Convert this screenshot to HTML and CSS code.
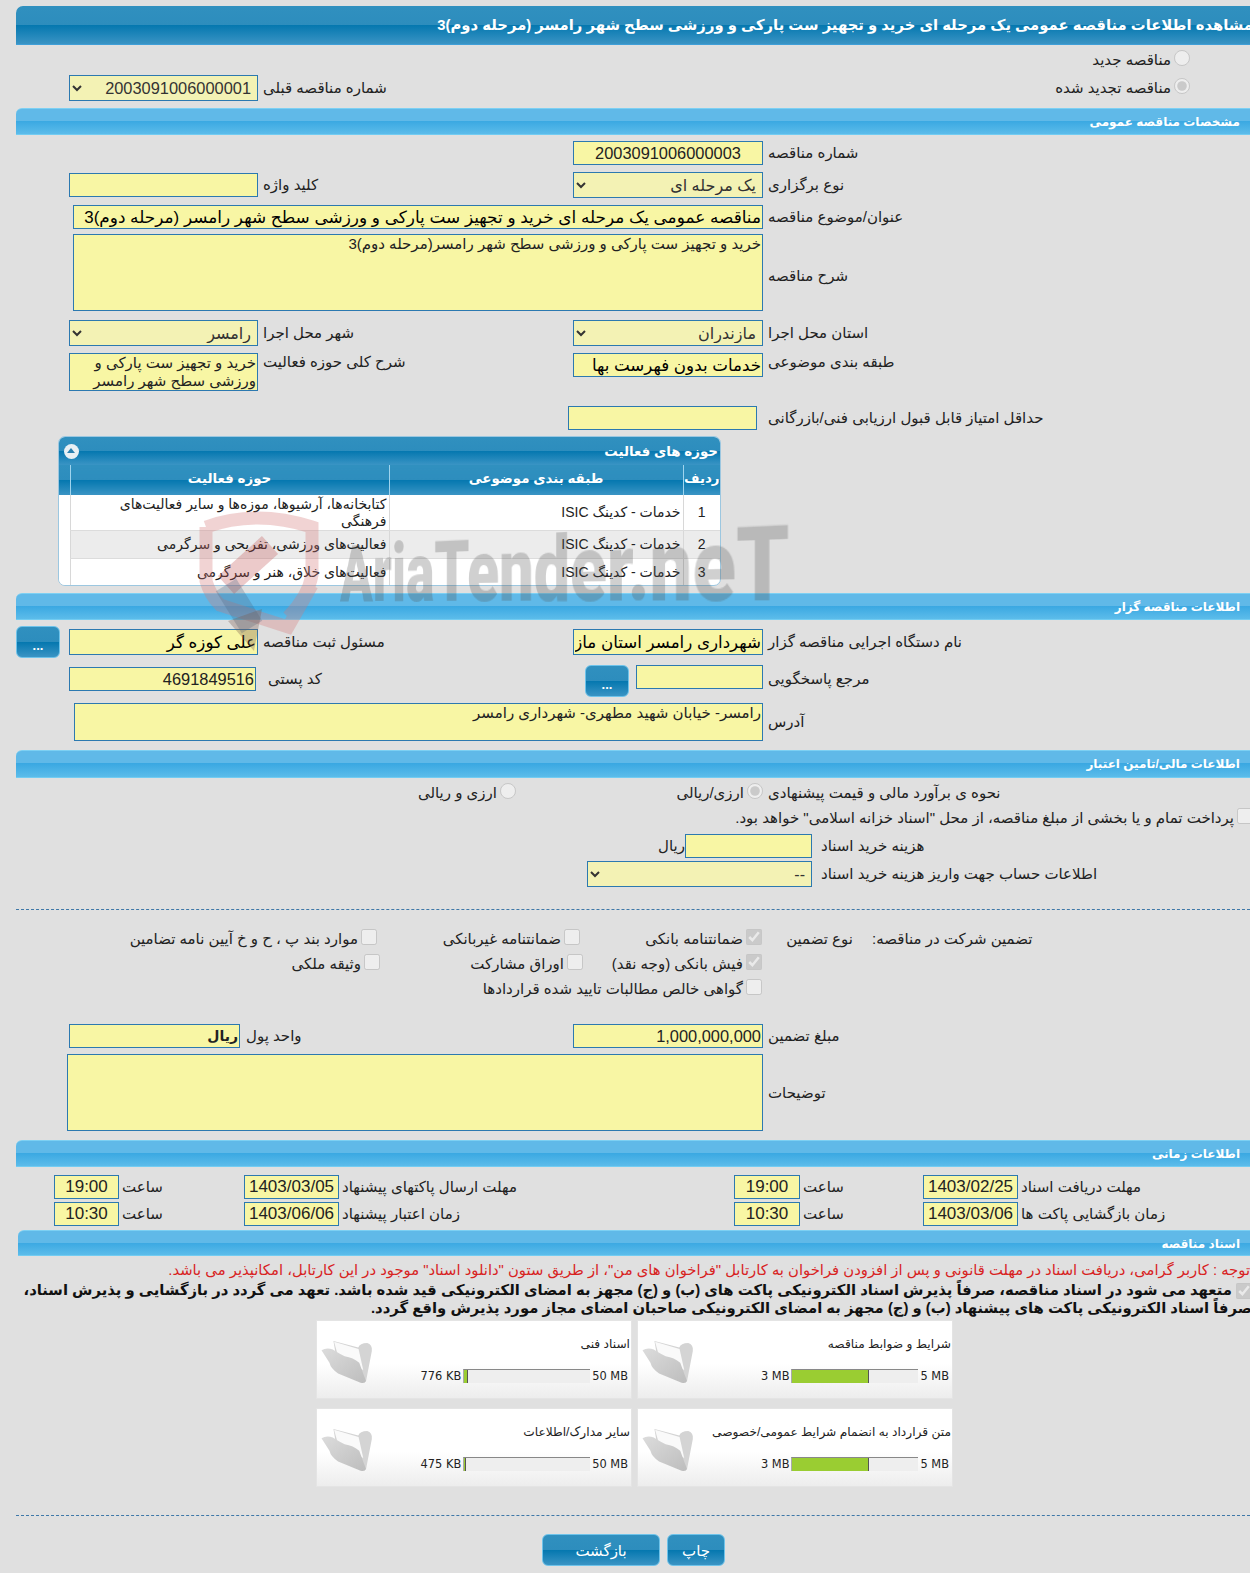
FILE: index.html
```html
<!DOCTYPE html>
<html lang="fa">

<head>
  <meta charset="UTF-8">
  <title>مشاهده اطلاعات مناقصه</title>
  <link rel="stylesheet" href="styles.css">
</head>

<body>
  <svg class="hidden" width="0" height="0">
    <defs>
      <linearGradient id="folderFront" x1="0" y1="0" x2="1" y2="1">
        <stop offset="0" stop-color="#dcdcdc"/>
        <stop offset="1" stop-color="#bdbdbd"/>
      </linearGradient>
    </defs>
    <symbol id="folder" viewBox="30 50 165 145">
      <path d="M70 62 L145 82 Q150 68 172 68 Q188 72 186 92 L168 186 L80 120 Z" fill="#d4d4d4"/>
      <path d="M72 64 L146 86 L160 150 L84 108 Z" fill="#fafafa"/>
      <path d="M34 90 Q50 80 68 88 Q90 102 104 108 Q130 112 148 128 L168 182 Q166 192 152 188 L84 160 Q62 146 58 128 Z" fill="url(#folderFront)"/>
    </symbol>
  </svg>

  <div class="page">
    <div class="mainTitle">مشاهده اطلاعات مناقصه عمومی یک مرحله ای خرید و تجهیز ست پارکی و ورزشی سطح شهر رامسر (مرحله دوم)3</div>

    <div class="radioRow">
      <label class="opt"><input type="radio" disabled> مناقصه جدید</label>
    </div>
    <div class="formRow">
      <select class="inL selectBox num"><option>2003091006000001</option></select>
      <div class="lblL label">شماره مناقصه قبلی</div>
      <label class="optCell opt"><input type="radio" checked disabled> مناقصه تجدید شده</label>
    </div>

    <div class="secBar mt7">مشخصات مناقصه عمومی</div>

    <div class="formRow mt6">
      <input class="inR field num center" value="2003091006000003">
      <div class="lblR label">شماره مناقصه</div>
    </div>
    <div class="formRow mt7">
      <input class="inL field" value="">
      <div class="lblL label">کلید واژه</div>
      <select class="inR selectBox"><option>یک مرحله ای</option></select>
      <div class="lblR label">نوع برگزاری</div>
    </div>
    <div class="formRow mt7">
      <input class="wideField field big" value="مناقصه عمومی یک مرحله ای خرید و تجهیز ست پارکی و ورزشی سطح شهر رامسر (مرحله دوم)3">
      <div class="lblR label">عنوان/موضوع مناقصه</div>
    </div>
    <div class="formRow mt5">
      <textarea class="wideField area h77">خرید و تجهیز ست پارکی و ورزشی سطح شهر رامسر(مرحله دوم)3</textarea>
      <div class="lblR label lblDown">شرح مناقصه</div>
    </div>
    <div class="formRow mt9">
      <select class="inL selectBox"><option>رامسر</option></select>
      <div class="lblL label">شهر محل اجرا</div>
      <select class="inR selectBox"><option>مازندران</option></select>
      <div class="lblR label">استان محل اجرا</div>
    </div>
    <div class="formRow mt7 alignTop">
      <textarea class="inL area h38">خرید و تجهیز ست پارکی و ورزشی سطح شهر رامسر</textarea>
      <div class="lblL label">شرح کلی حوزه فعالیت</div>
      <input class="inR field big" value="خدمات بدون فهرست بها">
      <div class="lblR label">طبقه بندی موضوعی</div>
    </div>
    <div class="formRow mt15">
      <input class="inR field shiftLeft" value="">
      <div class="lblR label">حداقل امتیاز قابل قبول ارزیابی فنی/بازرگانی</div>
    </div>

    <div class="panel">
      <div class="panelTitle">
        <span>حوزه های فعالیت</span>
        <span class="toggle"></span>
      </div>
      <table class="grid">
        <tr>
          <th class="colNo">ردیف</th>
          <th class="colCat">طبقه بندی موضوعی</th>
          <th class="colAct">حوزه فعالیت</th>
          <th class="colEnd"></th>
        </tr>
        <tr class="r1">
          <td class="colNo">1</td>
          <td class="colCat">خدمات - کدینگ ISIC</td>
          <td class="colAct">کتابخانه‌ها، آرشیوها، موزه‌ها و سایر فعالیت‌های<br>فرهنگی</td>
          <td class="colEnd"></td>
        </tr>
        <tr class="r2 alt">
          <td class="colNo">2</td>
          <td class="colCat">خدمات - کدینگ ISIC</td>
          <td class="colAct">فعالیت‌های ورزشی، تفریحی و سرگرمی</td>
          <td class="colEnd"></td>
        </tr>
        <tr class="r3">
          <td class="colNo">3</td>
          <td class="colCat">خدمات - کدینگ ISIC</td>
          <td class="colAct">فعالیت‌های خلاق، هنر و سرگرمی</td>
          <td class="colEnd"></td>
        </tr>
      </table>
    </div>

    <div class="secBar mt7">اطلاعات مناقصه گزار</div>

    <div class="formRow mt9">
      <div class="btnCell"><span class="dotsBtn">...</span></div>
      <input class="inL field big h26" value="علی کوزه گر">
      <div class="lblL label">مسئول ثبت مناقصه</div>
      <input class="inR field big h26" value="شهرداری رامسر استان مازندران">
      <div class="lblR label">نام دستگاه اجرایی مناقصه گزار</div>
    </div>
    <div class="formRow mt12">
      <input class="inL field num postal" value="4691849516">
      <div class="lblL label pad10">کد پستی</div>
      <div class="inR withBtn">
        <span class="dotsBtn">...</span>
        <input class="field" value="">
      </div>
      <div class="lblR label">مرجع پاسخگویی</div>
    </div>
    <div class="formRow mt12">
      <textarea class="wideField area h38 addr">رامسر- خیابان شهید مطهری- شهرداری رامسر</textarea>
      <div class="lblR label">آدرس</div>
    </div>

    <div class="secBar mt9 h28">اطلاعات مالی/تامین اعتبار</div>

    <div class="formRow mt2 h25">
      <label class="opt optOther"><input type="radio" disabled> ارزی و ریالی</label>
      <label class="opt inR"><input type="radio" checked disabled> ارزی/ریالی</label>
      <div class="lblR label">نحوه ی برآورد مالی و قیمت پیشنهادی</div>
    </div>
    <div class="checkLine">
      <label class="opt"><input type="checkbox" disabled> پرداخت تمام و یا بخشی از مبلغ مناقصه، از محل "اسناد خزانه اسلامی" خواهد بود.</label>
    </div>
    <div class="costRow">
      <span class="label rialText">ریال</span>
      <input class="field costInput" value="">
      <span class="label">هزینه خرید اسناد</span>
    </div>
    <div class="costRow accountRow">
      <select class="selectBox accountSelect"><option>--</option></select>
      <span class="label">اطلاعات حساب جهت واریز هزینه خرید اسناد</span>
    </div>

    <div class="dashLine"></div>

    <div class="guarantee">
      <label class="opt g3"><input type="checkbox" disabled> موارد بند پ ، ح و خ آیین نامه تضامین</label>
      <label class="opt g2"><input type="checkbox" disabled> ضمانتنامه غیربانکی</label>
      <label class="opt g1"><input type="checkbox" checked disabled> ضمانتنامه بانکی</label>
      <div class="label g4">نوع تضمین</div>
      <div class="label g5">تضمین شرکت در مناقصه:</div>
      <label class="opt g3 nudge"><input type="checkbox" disabled> وثیقه ملکی</label>
      <label class="opt g2 nudge"><input type="checkbox" disabled> اوراق مشارکت</label>
      <label class="opt g1"><input type="checkbox" checked disabled> فیش بانکی (وجه نقد)</label>
      <label class="opt g1 g1wide"><input type="checkbox" disabled> گواهی خالص مطالبات تایید شده قراردادها</label>
    </div>

    <div class="formRow mt23">
      <div class="unitCell">
        <input class="field strong" value="ریال">
        <span class="label">واحد پول</span>
      </div>
      <input class="inR field num" value="1,000,000,000">
      <div class="lblR label">مبلغ تضمین</div>
    </div>
    <div class="formRow mt6">
      <textarea class="wideField area h77 notes"></textarea>
      <div class="lblR label">توضیحات</div>
    </div>

    <div class="secBar mt9">اطلاعات زمانی</div>

    <div class="dateRow mt8">
      <input class="field num center time" value="19:00">
      <span class="label">ساعت</span>
      <input class="field num center" value="1403/03/05">
      <span class="label">مهلت ارسال پاکتهای پیشنهاد</span>
      <input class="field num center" value="19:00">
      <span class="label">ساعت</span>
      <input class="field num center" value="1403/02/25">
      <span class="label">مهلت دریافت اسناد</span>
    </div>
    <div class="dateRow mt3">
      <input class="field num center time" value="10:30">
      <span class="label">ساعت</span>
      <input class="field num center" value="1403/06/06">
      <span class="label">زمان اعتبار پیشنهاد</span>
      <input class="field num center" value="10:30">
      <span class="label">ساعت</span>
      <input class="field num center" value="1403/03/06">
      <span class="label">زمان بازگشایی پاکت ها</span>
    </div>

    <div class="secBar mt4 docsBar">اسناد مناقصه</div>

    <div class="redNote">توجه : کاربر گرامی، دریافت اسناد در مهلت قانونی و پس از افزودن فراخوان به کارتابل "فراخوان های من"، از طریق ستون "دانلود اسناد" موجود در این کارتابل، امکانپذیر می باشد.</div>
    <div class="pledge">
      <input type="checkbox" checked disabled>
      متعهد می شود در اسناد مناقصه، صرفاً پذیرش اسناد الکترونیکی پاکت های (ب) و (ج) مجهز به امضای الکترونیکی قید شده باشد. تعهد می گردد در بازگشایی و پذیرش اسناد،<br>
      صرفاً اسناد الکترونیکی پاکت های پیشنهاد (ب) و (ج) مجهز به امضای الکترونیکی صاحبان امضای مجاز مورد پذیرش واقع گردد.
    </div>

    <div class="cards">
      <div class="card">
        <svg class="folderIcon"><use href="#folder"/></svg>
        <div class="cardBody">
          <div class="cardTitle">اسناد فنی</div>
          <div class="sizeRow">
            <span>776 KB</span>
            <span class="track"><span class="fill w4"></span></span>
            <span>50 MB</span>
          </div>
        </div>
      </div>
      <div class="card">
        <svg class="folderIcon"><use href="#folder"/></svg>
        <div class="cardBody">
          <div class="cardTitle">شرایط و ضوابط مناقصه</div>
          <div class="sizeRow">
            <span>3 MB</span>
            <span class="track"><span class="fill w60"></span></span>
            <span>5 MB</span>
          </div>
        </div>
      </div>
      <div class="card">
        <svg class="folderIcon"><use href="#folder"/></svg>
        <div class="cardBody">
          <div class="cardTitle">سایر مدارک/اطلاعات</div>
          <div class="sizeRow">
            <span>475 KB</span>
            <span class="track"><span class="fill w2"></span></span>
            <span>50 MB</span>
          </div>
        </div>
      </div>
      <div class="card">
        <svg class="folderIcon"><use href="#folder"/></svg>
        <div class="cardBody">
          <div class="cardTitle">متن قرارداد به انضمام شرایط عمومی/خصوصی</div>
          <div class="sizeRow">
            <span>3 MB</span>
            <span class="track"><span class="fill w60"></span></span>
            <span>5 MB</span>
          </div>
        </div>
      </div>
    </div>

    <div class="dashLine bottomDash"></div>

    <div class="actions">
      <span class="bigBtn backBtn">بازگشت</span>
      <span class="bigBtn printBtn">چاپ</span>
    </div>

    <div class="watermark">
      <svg class="wmLogo" viewBox="0 0 130 150">
        <path d="M10 22 Q60 4 116 22 L116 70 Q112 92 92 112 M10 22 L10 76 Q14 90 24 100 L92 122 L116 80" fill="none" stroke="#d47878" stroke-opacity=".33" stroke-width="13"/>
        <path d="M74 40 L30 80" fill="none" stroke="#c05050" stroke-opacity=".3" stroke-width="24"/>
        <path d="M30 80 L56 122" fill="none" stroke="#506a88" stroke-opacity=".3" stroke-width="24"/>
        <path d="M32 116 L66 104 L58 146 Z" fill="#7a5a50" fill-opacity=".33"/>
      </svg>
      <span class="wmText">AriaTender.neT</span>
    </div>
  </div>
</body>

</html>
```

FILE: styles.css
```css
* {
  padding: 0;
  margin: 0;
  box-sizing: border-box;
}

html,
body {
  overflow: hidden;
  height: 1573px;
}

body {
  background: #e0e0e0;
  color: #222;
  font-family: "Liberation Sans", "DejaVu Sans", sans-serif;
  font-size: 15px;
}

.hidden {
  position: absolute;
}

.page {
  position: relative;
  width: 1250px;
  height: 1573px;
  padding-top: 6px;
  overflow: hidden;
}

.mt2 { margin-top: 2px; }
.mt3 { margin-top: 3px; }
.mt4 { margin-top: 4px; }
.mt5 { margin-top: 5px; }
.mt6 { margin-top: 6px; }
.mt7 { margin-top: 7px; }
.mt8 { margin-top: 8px; }
.mt9 { margin-top: 9px; }
.mt12 { margin-top: 12px; }
.mt15 { margin-top: 15px; }
.mt23 { margin-top: 23px; }

/* title bars */
.mainTitle {
  width: 1237px;
  height: 39px;
  margin-left: 16px;
  direction: rtl;
  white-space: nowrap;
  line-height: 38px;
  font-size: 14.8px;
  font-weight: bold;
  color: #fff;
  border-top-left-radius: 7px;
  border-bottom: 1px solid #3f9fd8;
  background: linear-gradient(#3090bf 0, #2d8dbd 50%, #0477af 50%, #3a94c4 100%);
}

.secBar {
  width: 1234px;
  height: 27px;
  margin-left: 16px;
  padding-right: 10px;
  direction: rtl;
  line-height: 26px;
  font-size: 12px;
  font-weight: bold;
  color: #fff;
  border-top: 1px solid #7dd0f3;
  border-top-left-radius: 6px;
  border-bottom: 1px solid #72ccf2;
  background: linear-gradient(#60b9e8 0, #60b9e8 48%, #3aa8e2 48%, #5cbcea 100%);
}

.h28 {
  height: 28px;
}

.docsBar {
  width: 1232px;
  margin-left: 18px;
  height: 26px;
}

/* form rows */
.formRow {
  display: grid;
  grid-template-columns: 69px 189px 315px 190px 1fr;
  align-items: center;
}

.alignTop {
  align-items: start;
}

.h25 {
  height: 25px;
}

.inL { grid-column: 2; grid-row: 1; }
.lblL { grid-column: 3; grid-row: 1; padding-left: 5px; }
.inR { grid-column: 4; grid-row: 1; }
.lblR { grid-column: 5; grid-row: 1; padding-left: 5px; }

.label {
  direction: rtl;
  text-align: left;
  white-space: nowrap;
}

.lblDown {
  padding-top: 6px;
}

.pad10 {
  padding-left: 10px;
}

.radioRow {
  height: 30px;
  padding-right: 60px;
  direction: rtl;
  display: flex;
  align-items: center;
}

.opt {
  direction: rtl;
  display: flex;
  align-items: center;
  gap: 3px;
  white-space: nowrap;
}

.opt input {
  width: 16px;
  height: 16px;
  flex: none;
  margin-top: -4px;
}

.optCell {
  grid-column: 5;
  grid-row: 1;
  padding-right: 60px;
}

.field,
.area,
.selectBox {
  display: block;
  width: 100%;
  direction: rtl;
  border: 1px solid #2c79b0;
  border-radius: 0;
  color: #222;
  font-family: "Liberation Sans", "DejaVu Sans", sans-serif;
  font-size: 15px;
}

.field {
  height: 24px;
  padding: 0 1px;
  background: #f8f6a4;
  outline: none;
}

.h26 {
  height: 26px;
}

.area {
  padding: 0 1px;
  background: #f8f6a4;
  resize: none;
  overflow: hidden;
  outline: none;
  line-height: 18px;
}

.h77 { height: 77px; }
.h38 { height: 38px; }

.selectBox {
  height: 26px;
  padding: 0 2px 0 6px;
  background: #f3f2b4;
  color: #333;
  font-size: 16px;
}

.num {
  font-size: 16.4px;
}

.center {
  text-align: center;
}

.big {
  font-size: 16.7px;
  color: #000;
}

.strong {
  font-size: 14px;
  font-weight: bold;
}

.wideField {
  grid-column: 2 / 5;
  grid-row: 1;
  width: calc(100% - 4px);
  margin-left: 4px;
}

.wideField.big {
  font-size: 16.9px;
}

.shiftLeft {
  width: 189px;
  margin-left: -5px;
}

.postal {
  width: 187px;
}

.withBtn {
  display: flex;
  align-self: start;
  align-items: flex-start;
  gap: 7px;
  margin: -2px 0 -8px 12px;
}

.withBtn .field {
  width: 127px;
  flex: none;
}

.withBtn .dotsBtn {
  margin: 0;
}

.btnCell {
  grid-column: 1;
  grid-row: 1;
  padding-left: 16px;
}

.addr {
  width: calc(100% - 5px);
  margin-left: 5px;
}

.dotsBtn {
  display: block;
  width: 44px;
  height: 32px;
  margin: -3px 0;
  flex: none;
  text-align: center;
  line-height: 38px;
  font-size: 13px;
  font-weight: bold;
  color: #fff;
  border: 1px solid #6ec3ea;
  border-radius: 6px;
  background: linear-gradient(#3090bf 0, #2d8dbd 50%, #0477af 50%, #3a94c4 100%);
}

.optOther {
  grid-column: 3;
  grid-row: 1;
  padding-right: 57px;
}

.checkLine {
  height: 25px;
  direction: rtl;
  display: flex;
  align-items: center;
  margin-right: -3px;
}

.costRow {
  display: flex;
  align-items: center;
  margin-left: 661px;
  margin-top: 4px;
  gap: 9px;
}

.rialText {
  width: 24px;
  margin-right: -9px;
}

.costInput {
  width: 127px;
  flex: none;
}

.accountRow {
  margin-left: 587px;
  margin-top: 3px;
}

.accountSelect {
  width: 225px;
  flex: none;
}

.dashLine {
  height: 0;
  margin: 22px 0 0 16px;
  border-top: 1px dashed #3f78a8;
}

.guarantee {
  display: grid;
  grid-template-columns: 377px 203px 182px 25px 66px 19px 1fr;
  grid-template-rows: repeat(3, 25px);
  margin-top: 16px;
  align-items: center;
}

.g1 { grid-column: 3; }
.g2 { grid-column: 2; }
.g3 { grid-column: 1; }
.g4 { grid-column: 5; grid-row: 1; }
.g5 { grid-column: 7; grid-row: 1; }
.g1wide { grid-row: 3; }

.nudge {
  margin-right: -3px;
}

.unitCell {
  grid-column: 2 / 4;
  grid-row: 1;
  display: flex;
  align-items: center;
  gap: 6px;
}

.unitCell .field {
  width: 171px;
  flex: none;
}

.notes {
  width: calc(100% + 2px);
  margin-left: -2px;
}

.dateRow {
  display: grid;
  grid-template-columns: 54px 65px 125px 95px 395px 66px 123px 95px 1fr;
  align-items: center;
}

.dateRow .time {
  grid-column: 2;
}

.dateRow .label {
  padding-left: 3px;
}

.dateRow .num {
  font-size: 17px;
}

/* activity panel */
.panel {
  width: 663px;
  height: 150px;
  margin: 6px 0 0 58px;
  background: #fff;
  border: 1px solid #9cc7e0;
  border-radius: 7px;
  overflow: hidden;
}

.panelTitle {
  display: flex;
  justify-content: space-between;
  align-items: center;
  height: 28px;
  padding: 0 2px 0 5px;
  direction: rtl;
  font-size: 13.4px;
  font-weight: bold;
  color: #fff;
  background: linear-gradient(#3090bf 0, #2d8dbd 50%, #0477af 50%, #3a94c4 100%);
}

.toggle {
  position: relative;
  width: 15px;
  height: 15px;
  border-radius: 50%;
  background: #e8f0f4;
}

.toggle::after {
  content: "";
  position: absolute;
  left: 3px;
  top: 4px;
  border: 4px solid transparent;
  border-top: 0;
  border-bottom: 5px solid #2a80b0;
}

.grid {
  width: 100%;
  direction: rtl;
  table-layout: fixed;
  border-collapse: collapse;
}

.grid th {
  height: 30px;
  padding-bottom: 3px;
  font-size: 13.4px;
  font-weight: bold;
  color: #fff;
  border-left: 1px solid #9fd4ee;
  background: linear-gradient(#3090bf 0, #2d8dbd 50%, #0477af 50%, #3a94c4 100%);
}

.grid td {
  padding: 0 2px;
  text-align: right;
  line-height: 17px;
  font-size: 14px;
  border-left: 1px solid #d8d8d8;
  border-bottom: 1px solid #dcdcdc;
}

.grid .colNo {
  width: 37px;
  text-align: center;
}

.grid .colCat {
  width: 294px;
}

.grid .colAct {
  width: 319px;
}

.grid .colEnd {
  background: #fff;
  border: 0;
}

.grid th.colEnd {
  background: linear-gradient(#3090bf 0, #2d8dbd 50%, #0477af 50%, #3a94c4 100%);
}

.r1 td { height: 35px; }
.r1 .colAct { padding-top: 1px; }
.r2 td { height: 28px; }
.r3 td { height: 28px; }

.alt td {
  background: #ececec;
}

/* documents */
.redNote {
  width: 1232px;
  margin: 5px 0 0 18px;
  direction: rtl;
  white-space: nowrap;
  line-height: 18px;
  font-size: 14.8px;
  color: #d8231f;
}

.pledge {
  width: 1234px;
  margin: 2px 0 0 18px;
  direction: rtl;
  white-space: nowrap;
  line-height: 18px;
  font-size: 14.8px;
  font-weight: bold;
  color: #111;
}

.pledge input {
  width: 16px;
  height: 16px;
  vertical-align: middle;
}

.cards {
  display: grid;
  grid-template-columns: 316px 316px;
  grid-auto-rows: 79px;
  gap: 9px 5px;
  margin: 3px 0 0 316px;
}

.card {
  display: flex;
  border: 1px solid #e4e4e4;
  background: linear-gradient(#fff 0, #fff 55%, #ededed 100%);
}

.folderIcon {
  width: 55px;
  height: 48px;
  margin: 16px 0 0 3px;
  flex: none;
  filter: blur(.5px);
}

.cardBody {
  flex: 1;
  padding: 16px 1px 0 0;
  direction: rtl;
  font-size: 12.2px;
}

.cardTitle {
  height: 32px;
  white-space: nowrap;
}

.sizeRow {
  display: flex;
  direction: ltr;
  justify-content: flex-end;
  align-items: center;
  gap: 2px;
  padding-right: 2px;
  font-family: "DejaVu Sans", sans-serif;
  font-size: 11.4px;
  white-space: nowrap;
}

.track {
  width: 127px;
  height: 14px;
  display: block;
  background: #eee;
  border-top: 1px solid #888;
  border-left: 1px solid #aaa;
}

.fill {
  display: block;
  height: 100%;
  background: #9acd32;
  border-right: 1px solid #555;
}

.w2 { width: 2px; }
.w4 { width: 4px; }
.w60 { width: 77px; }

.bottomDash {
  margin-top: 28px;
}

.actions {
  display: flex;
  gap: 7px;
  margin: 18px 0 0 542px;
}

.bigBtn {
  display: block;
  height: 32px;
  text-align: center;
  line-height: 31px;
  font-size: 15px;
  color: #fff;
  border: 1px solid #6ec3ea;
  border-radius: 6px;
  background: linear-gradient(#3090bf 0, #2d8dbd 50%, #0477af 50%, #3a94c4 100%);
}

.backBtn { width: 118px; }
.printBtn { width: 58px; }

/* site watermark sits over the form */
.watermark {
  position: absolute;
  left: 196px;
  top: 505px;
  width: 620px;
  height: 150px;
  pointer-events: none;
}

.wmLogo {
  position: absolute;
  left: 0;
  top: 0;
  width: 130px;
  height: 150px;
}

.wmText {
  position: absolute;
  left: 144px;
  top: 31px;
  font-family: "Roboto", sans-serif;
  font-weight: 900;
  font-size: 78px;
  line-height: 78px;
  white-space: nowrap;
  color: rgba(80, 80, 80, .27);
  transform: perspective(600px) rotateY(-26deg) scaleX(.67);
  transform-origin: 0 67px;
}
```
